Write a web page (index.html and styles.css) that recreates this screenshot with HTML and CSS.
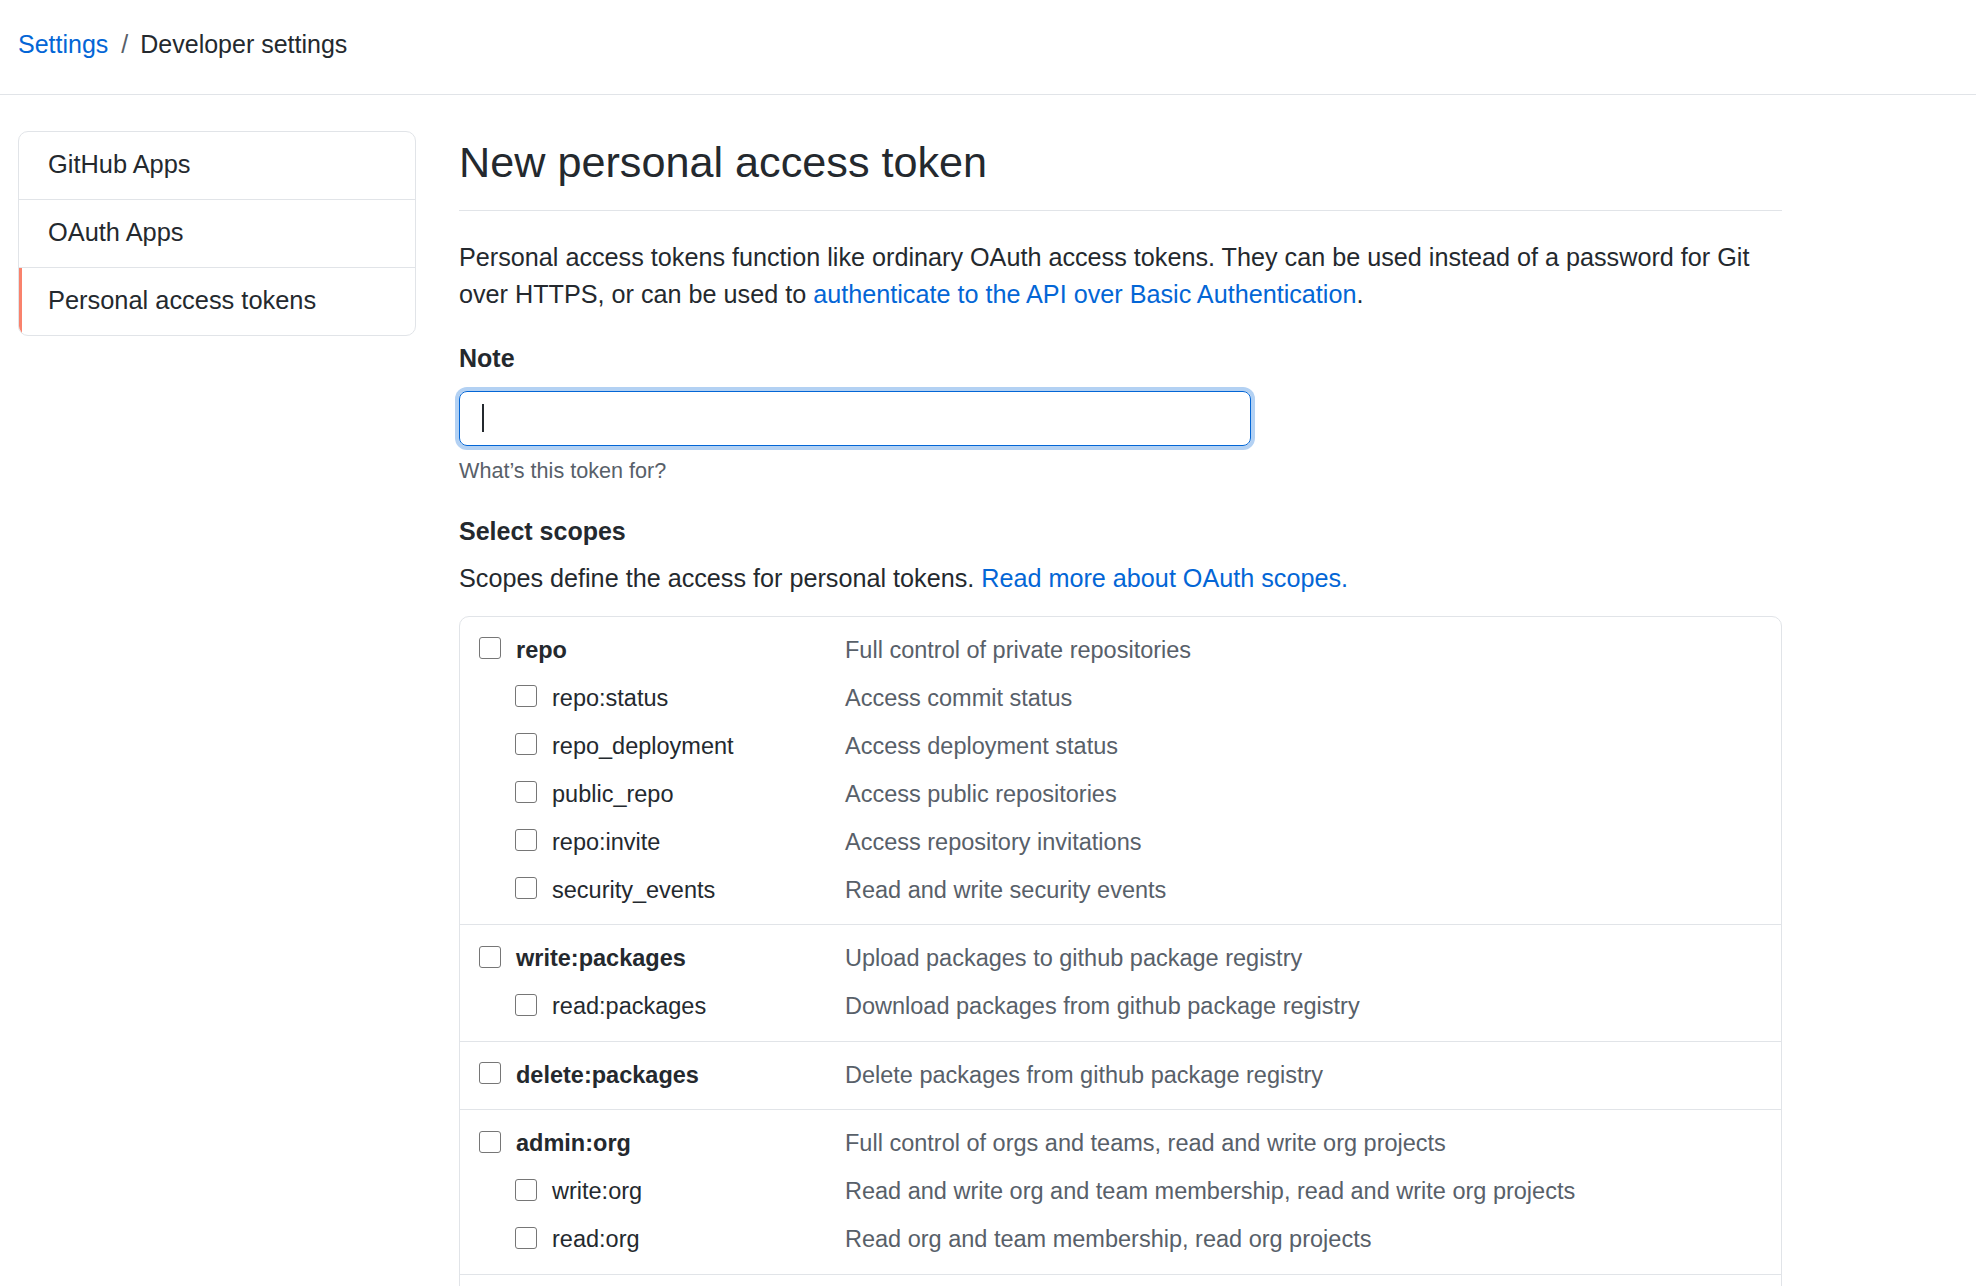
FILE: index.html
```html
<!DOCTYPE html>
<html lang="en">
<head>
<meta charset="utf-8">
<title>New personal access token</title>
<link rel="stylesheet" href="styles.css">
</head>
<body>
<header class="topbar">
  <nav class="breadcrumb">
    <a class="link" href="#">Settings</a><span class="sep">/</span><span class="current">Developer settings</span>
  </nav>
</header>
<div class="layout">
  <aside class="sidebar">
    <ul class="menu">
      <li class="menu-item">GitHub Apps</li>
      <li class="menu-item">OAuth Apps</li>
      <li class="menu-item selected">Personal access tokens</li>
    </ul>
  </aside>
  <main class="content">
    <h2 class="subhead">New personal access token</h2>
    <p class="intro">Personal access tokens function like ordinary OAuth access tokens. They can be used instead of a password for Git over HTTPS, or can be used to <a class="link" href="#">authenticate to the API over Basic Authentication</a>.</p>
    <div class="label">Note</div>
    <div class="input"><span class="caret"></span></div>
    <div class="hint">What’s this token for?</div>
    <h3 class="label scopes-title">Select scopes</h3>
    <p class="scopes-intro">Scopes define the access for personal tokens. <a class="link" href="#">Read more about OAuth scopes.</a></p>
    <div class="scopes">
      <div class="group">
        <div class="row"><div class="name"><input type="checkbox" class="cb"><b>repo</b></div><div class="desc">Full control of private repositories</div></div>
        <div class="row child"><div class="name"><input type="checkbox" class="cb">repo:status</div><div class="desc">Access commit status</div></div>
        <div class="row child"><div class="name"><input type="checkbox" class="cb">repo_deployment</div><div class="desc">Access deployment status</div></div>
        <div class="row child"><div class="name"><input type="checkbox" class="cb">public_repo</div><div class="desc">Access public repositories</div></div>
        <div class="row child"><div class="name"><input type="checkbox" class="cb">repo:invite</div><div class="desc">Access repository invitations</div></div>
        <div class="row child"><div class="name"><input type="checkbox" class="cb">security_events</div><div class="desc">Read and write security events</div></div>
      </div>
      <div class="group">
        <div class="row"><div class="name"><input type="checkbox" class="cb"><b>write:packages</b></div><div class="desc">Upload packages to github package registry</div></div>
        <div class="row child"><div class="name"><input type="checkbox" class="cb">read:packages</div><div class="desc">Download packages from github package registry</div></div>
      </div>
      <div class="group">
        <div class="row"><div class="name"><input type="checkbox" class="cb"><b>delete:packages</b></div><div class="desc">Delete packages from github package registry</div></div>
      </div>
      <div class="group">
        <div class="row"><div class="name"><input type="checkbox" class="cb"><b>admin:org</b></div><div class="desc">Full control of orgs and teams, read and write org projects</div></div>
        <div class="row child"><div class="name"><input type="checkbox" class="cb">write:org</div><div class="desc">Read and write org and team membership, read and write org projects</div></div>
        <div class="row child"><div class="name"><input type="checkbox" class="cb">read:org</div><div class="desc">Read org and team membership, read org projects</div></div>
      </div>
      <div class="group">
        <div class="row"><div class="name"><input type="checkbox" class="cb"><b>admin:public_key</b></div><div class="desc">Full control of user public keys</div></div>
        <div class="row child"><div class="name"><input type="checkbox" class="cb">write:public_key</div><div class="desc">Write user public keys</div></div>
        <div class="row child"><div class="name"><input type="checkbox" class="cb">read:public_key</div><div class="desc">Read user public keys</div></div>
      </div>
    </div>
  </main>
</div>
</body>
</html>
```
FILE: styles.css
```css
html, body {
  margin: 0;
  padding: 0;
  background: #ffffff;
}
body {
  height: 1286px;
  overflow: hidden;
  font-family: "Liberation Sans", Arial, sans-serif;
  font-size: 25.2px;
  line-height: 37px;
  color: #24292e;
}
.link {
  color: #0366d6;
  text-decoration: none;
}
.topbar {
  height: 95px;
  box-sizing: border-box;
  padding: 0 18px 6px;
  display: flex;
  align-items: center;
  border-bottom: 1px solid #e1e4e8;
}
.breadcrumb {
  font-size: 25px;
  display: flex;
  align-items: center;
}
.sep {
  color: #586069;
  margin: 0 12px 0 13px;
}
.layout {
  display: flex;
  align-items: flex-start;
  padding: 36px 18px 0;
  gap: 43px;
}
.sidebar {
  width: 398px;
  flex: none;
}
.menu {
  list-style: none;
  margin: 0;
  padding: 0;
  border: 1px solid #e1e4e8;
  border-radius: 10px;
  overflow: hidden;
}
.menu-item {
  height: 65px;
  padding: 0 0 2px 29px;
  display: flex;
  align-items: center;
  border-bottom: 1px solid #e1e4e8;
  font-size: 25.4px;
}
.menu-item:last-child {
  border-bottom: none;
}
.menu-item.selected {
  box-shadow: inset 3px 0 0 #f9826c;
}
.content {
  width: 1323px;
  flex: none;
  padding-top: 4px;
}
.subhead {
  margin: 0;
  font-size: 43.2px;
  font-weight: 400;
  line-height: 54px;
  padding-bottom: 21px;
  border-bottom: 1px solid #e1e4e8;
}
.intro {
  margin: 28px 0 0;
}
.label {
  margin: 27px 0 0;
  font-size: 25px;
  font-weight: 700;
  line-height: 37px;
}
.input {
  margin-top: 14px;
  width: 792px;
  height: 55px;
  box-sizing: border-box;
  border: 1px solid #0366d6;
  border-radius: 8px;
  box-shadow: 0 0 0 4px rgba(3, 102, 214, 0.3);
  padding-left: 22px;
  display: flex;
  align-items: center;
}
.caret {
  width: 2px;
  height: 28px;
  margin-bottom: 1px;
  background: #24292e;
}
.hint {
  margin-top: 8.5px;
  font-size: 21.6px;
  line-height: 32px;
  color: #586069;
}
.scopes-title {
  margin-top: 26px;
}
.scopes-intro {
  margin: 10px 0 0;
}
.scopes {
  margin-top: 19px;
  border: 1px solid #e1e4e8;
  border-radius: 10px;
  font-size: 23.5px;
}
.group {
  padding: 9.5px 0 10px;
  border-bottom: 1px solid #e1e4e8;
}
.row {
  height: 48px;
  display: flex;
  align-items: center;
  padding-left: 19px;
}
.name {
  width: 366px;
  box-sizing: border-box;
  flex: none;
  display: flex;
  align-items: center;
}
.row.child .name {
  padding-left: 36px;
}
.name b {
  font-weight: 700;
}
.cb {
  -webkit-appearance: none;
  appearance: none;
  width: 22px;
  height: 22px;
  margin: 0 15px 4px 0;
  border: 1px solid #767676;
  border-radius: 3px;
  background: #ffffff;
  flex: none;
}
.desc {
  color: #586069;
}
```
